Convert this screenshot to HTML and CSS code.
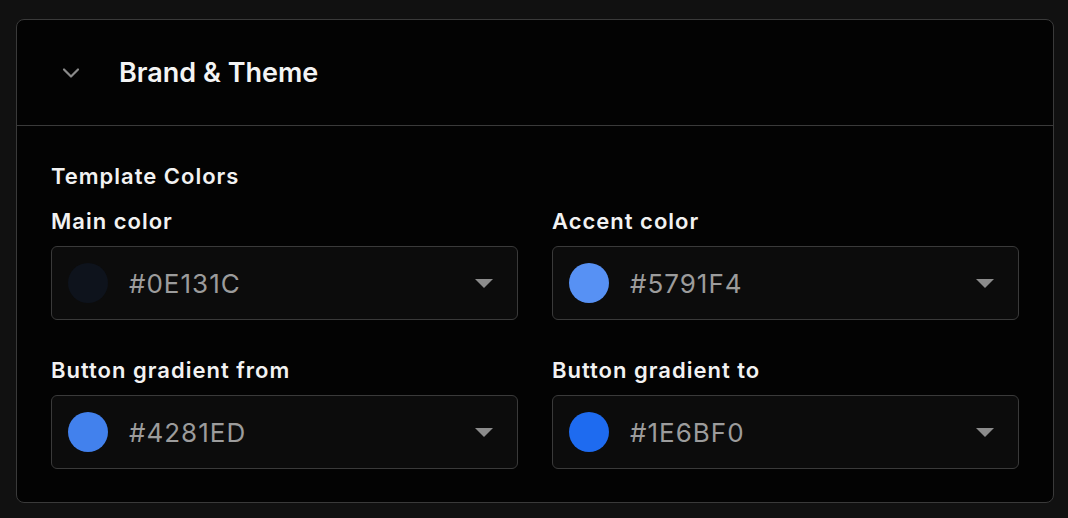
FILE: index.html
```html
<!DOCTYPE html>
<html lang="en">
<head>
  <meta charset="UTF-8">
  <title>Brand &amp; Theme</title>
  <link rel="stylesheet" href="styles.css">
</head>
<body>
  <div class="panel">
    <div class="panel-head">
      <svg class="chevron" width="18" height="12" viewBox="0 0 18 12">
        <path d="M2 2.5 L9 9.5 L16 2.5" fill="none" stroke="#8a8a8a" stroke-width="2.2" stroke-linecap="round" stroke-linejoin="round"/>
      </svg>
      <h2>Brand &amp; Theme</h2>
    </div>
    <div class="panel-body">
      <h4>Template Colors</h4>
      <div class="grid">
        <div class="field">
          <label>Main color</label>
          <div class="select">
            <span class="swatch" style="background:#0E131C"></span>
            <span class="value">#0E131C</span>
            <span class="caret"></span>
          </div>
        </div>
        <div class="field">
          <label>Accent color</label>
          <div class="select">
            <span class="swatch" style="background:#5791F4"></span>
            <span class="value">#5791F4</span>
            <span class="caret"></span>
          </div>
        </div>
        <div class="field">
          <label>Button gradient from</label>
          <div class="select">
            <span class="swatch" style="background:#4281ED"></span>
            <span class="value">#4281ED</span>
            <span class="caret"></span>
          </div>
        </div>
        <div class="field">
          <label>Button gradient to</label>
          <div class="select">
            <span class="swatch" style="background:#1E6BF0"></span>
            <span class="value">#1E6BF0</span>
            <span class="caret"></span>
          </div>
        </div>
      </div>
    </div>
  </div>
</body>
</html>
```

FILE: styles.css
```css
body {
  font-family: Inter, "Noto Sans", sans-serif;
  background-color: #111111;
  margin: 0;
  padding: 19px 14px 0 16px;
}

.panel {
  background-color: #030303;
  border: 1.5px solid #3a3a3a;
  border-radius: 8px;
  overflow: hidden;
}

.panel-head {
  display: flex;
  align-items: center;
  height: 105px;
  padding-left: 45px;
  border-bottom: 1.5px solid #3a3a3a;
}

.chevron {
  margin-right: 39px;
}

.panel-head h2 {
  margin: 0;
  color: #f4f4f4;
  font-size: 27px;
  font-weight: 600;
}

.panel-body {
  padding: 36px 34px 33px 34px;
}

.panel-body h4 {
  margin: 0 0 17px 0;
  color: #f2f2f2;
  font-size: 22px;
  font-weight: 600;
  letter-spacing: 1px;
  line-height: 28px;
}

.grid {
  display: grid;
  grid-template-columns: 1fr 1fr;
  column-gap: 34px;
  row-gap: 36px;
}

.field label {
  display: block;
  margin-bottom: 11px;
  color: #f2f2f2;
  font-size: 22px;
  font-weight: 600;
  letter-spacing: 1px;
  line-height: 28px;
}

.select {
  display: flex;
  align-items: center;
  height: 72px;
  padding: 0 24px 0 16px;
  background-color: #0c0c0c;
  border: 1.5px solid #3a3a3a;
  border-radius: 6px;
}

.swatch {
  width: 40px;
  height: 40px;
  border-radius: 50%;
  margin-right: 21px;
}

.value {
  flex: 1;
  color: #9c9c9c;
  font-size: 26px;
  letter-spacing: 1px;
}

.caret {
  width: 0;
  height: 0;
  border-left: 9px solid transparent;
  border-right: 9px solid transparent;
  border-top: 9px solid #8c8c8c;
}
```
